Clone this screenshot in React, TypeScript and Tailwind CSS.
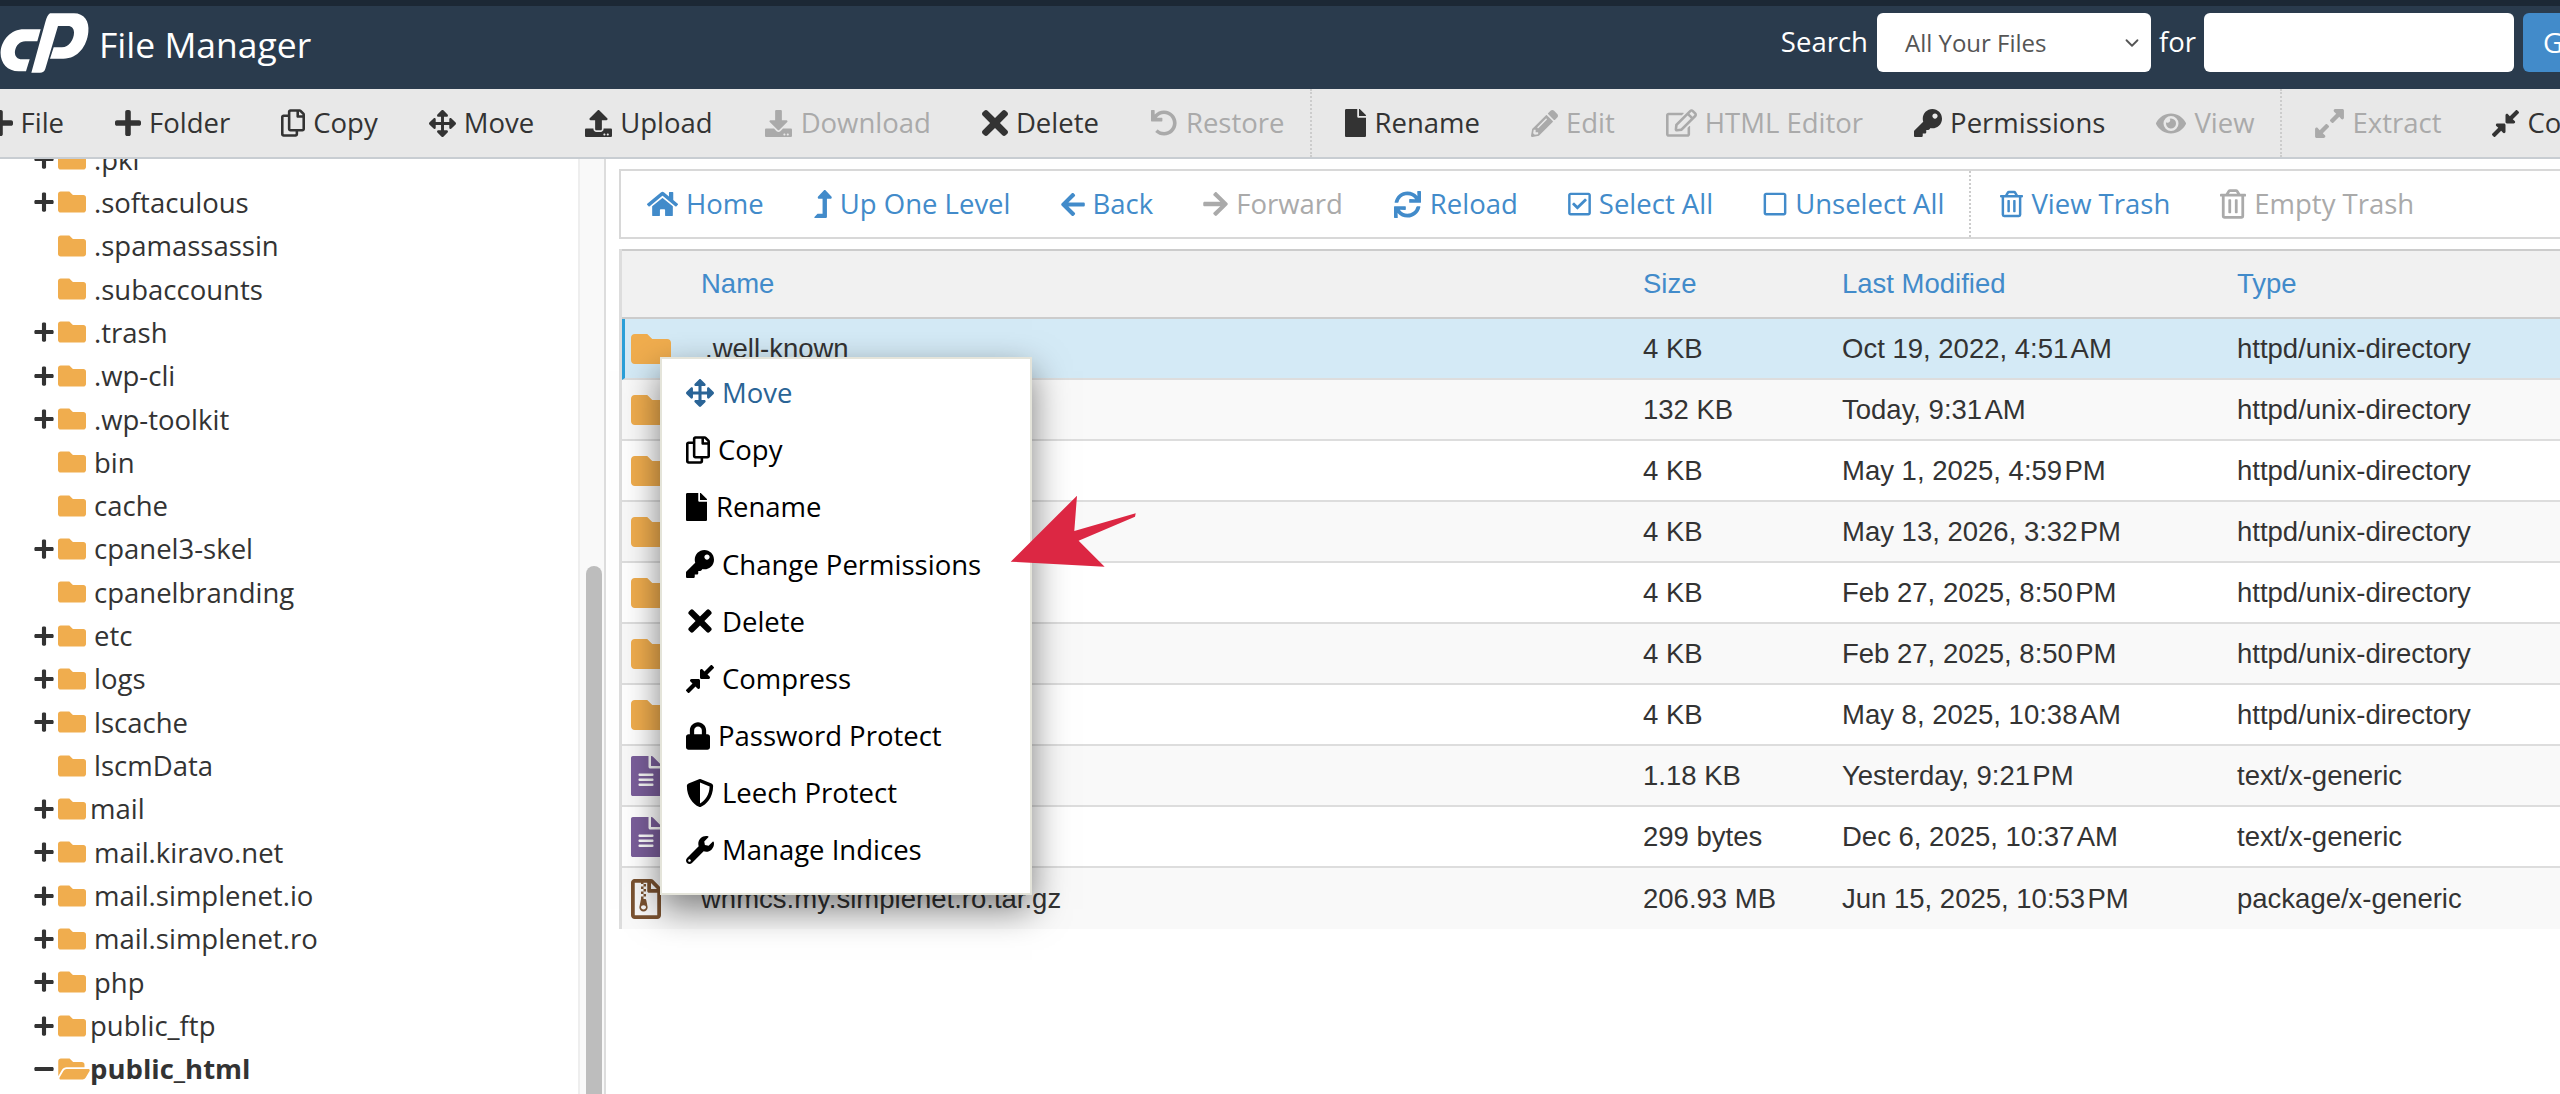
import React from "react";
import {
  FaArrowLeft,
  FaArrowRight,
  FaArrowsAlt,
  FaCompressAlt,
  FaDownload,
  FaEye,
  FaExpandAlt,
  FaFile,
  FaFileAlt,
  FaFolder,
  FaFolderOpen,
  FaHome,
  FaKey,
  FaLevelUpAlt,
  FaLock,
  FaMinus,
  FaPencilAlt,
  FaPlus,
  FaRegCheckSquare,
  FaRegCopy,
  FaRegEdit,
  FaRegFileArchive,
  FaRegSquare,
  FaRegTrashAlt,
  FaShieldAlt,
  FaSync,
  FaTimes,
  FaUndo,
  FaUpload,
  FaWrench,
} from "react-icons/fa";
import { LuChevronDown } from "react-icons/lu";

type ToolItem = {
  icon: React.ComponentType<{ className?: string }>;
  label: string;
  iconClass: string;
  muted?: boolean;
};

const topTools: ToolItem[][] = [
  [
    { icon: FaPlus, label: "File", iconClass: "w-[26px] h-[30px]" },
    { icon: FaPlus, label: "Folder", iconClass: "w-[26px] h-[30px]" },
    { icon: FaRegCopy, label: "Copy", iconClass: "w-[24px] h-[28px]" },
    { icon: FaArrowsAlt, label: "Move", iconClass: "w-[27px] h-[27px]" },
    { icon: FaUpload, label: "Upload", iconClass: "w-[27px] h-[27px]" },
    { icon: FaDownload, label: "Download", iconClass: "w-[29px] h-[27px]", muted: true },
    { icon: FaTimes, label: "Delete", iconClass: "w-[26px] h-[38px]" },
    { icon: FaUndo, label: "Restore", iconClass: "w-[28px] h-[26px]", muted: true },
  ],
  [
    { icon: FaFile, label: "Rename", iconClass: "w-[21px] h-[28px]" },
    { icon: FaPencilAlt, label: "Edit", iconClass: "w-[27px] h-[27px]", muted: true },
    { icon: FaRegEdit, label: "HTML Editor", iconClass: "w-[31px] h-[28px]", muted: true },
    { icon: FaKey, label: "Permissions", iconClass: "w-[28px] h-[28px]" },
    { icon: FaEye, label: "View", iconClass: "w-[30px] h-[27px]", muted: true },
  ],
  [
    { icon: FaExpandAlt, label: "Extract", iconClass: "w-[29px] h-[33px]", muted: true },
    { icon: FaCompressAlt, label: "Compress", iconClass: "w-[27px] h-[31px]" },
  ],
];

const navTools: ToolItem[][] = [
  [
    { icon: FaHome, label: "Home", iconClass: "w-[31px] h-[28px]" },
    { icon: FaLevelUpAlt, label: "Up One Level", iconClass: "w-[18px] h-[28px]" },
    { icon: FaArrowLeft, label: "Back", iconClass: "w-[24px] h-[27px]" },
    { icon: FaArrowRight, label: "Forward", iconClass: "w-[25px] h-[28px]", muted: true },
    { icon: FaSync, label: "Reload", iconClass: "w-[29px] h-[27px]" },
    { icon: FaRegCheckSquare, label: "Select All", iconClass: "w-[23px] h-[26px]" },
    { icon: FaRegSquare, label: "Unselect All", iconClass: "w-[24px] h-[26px]" },
  ],
  [
    { icon: FaRegTrashAlt, label: "View Trash", iconClass: "w-[23px] h-[30px]" },
    { icon: FaRegTrashAlt, label: "Empty Trash", iconClass: "w-[26px] h-[30px]", muted: true },
  ],
];

const tree = [
  { name: ".pki", plus: true },
  { name: ".softaculous", plus: true },
  { name: ".spamassassin" },
  { name: ".subaccounts" },
  { name: ".trash", plus: true },
  { name: ".wp-cli", plus: true },
  { name: ".wp-toolkit", plus: true },
  { name: "bin" },
  { name: "cache" },
  { name: "cpanel3-skel", plus: true },
  { name: "cpanelbranding" },
  { name: "etc", plus: true },
  { name: "logs", plus: true },
  { name: "lscache", plus: true },
  { name: "lscmData" },
  { name: "mail", plus: true, tight: true },
  { name: "mail.kiravo.net", plus: true },
  { name: "mail.simplenet.io", plus: true },
  { name: "mail.simplenet.ro", plus: true },
  { name: "php", plus: true },
  { name: "public_ftp", plus: true, tight: true },
];

const files = [
  { kind: "folder", name: ".well-known", size: "4 KB", date: "Oct 19, 2022, 4:51\u200aAM", type: "httpd/unix-directory" },
  { kind: "folder", name: "", size: "132 KB", date: "Today, 9:31\u200aAM", type: "httpd/unix-directory" },
  { kind: "folder", name: "", size: "4 KB", date: "May 1, 2025, 4:59\u200aPM", type: "httpd/unix-directory" },
  { kind: "folder", name: "", size: "4 KB", date: "May 13, 2026, 3:32\u200aPM", type: "httpd/unix-directory" },
  { kind: "folder", name: "", size: "4 KB", date: "Feb 27, 2025, 8:50\u200aPM", type: "httpd/unix-directory" },
  { kind: "folder", name: "", size: "4 KB", date: "Feb 27, 2025, 8:50\u200aPM", type: "httpd/unix-directory" },
  { kind: "folder", name: "", size: "4 KB", date: "May 8, 2025, 10:38\u200aAM", type: "httpd/unix-directory" },
  { kind: "text", name: "", size: "1.18 KB", date: "Yesterday, 9:21\u200aPM", type: "text/x-generic" },
  { kind: "text", name: "", size: "299 bytes", date: "Dec 6, 2025, 10:37\u200aAM", type: "text/x-generic" },
  { kind: "zip", name: "whmcs.my.simplenet.ro.tar.gz", size: "206.93 MB", date: "Jun 15, 2025, 10:53\u200aPM", type: "package/x-generic" },
];

const menuItems = [
  { icon: FaArrowsAlt, label: "Move", iconClass: "w-[28px] h-[28px]", labelClass: "ml-[8px] text-[#2a6496]", iconColor: "text-[#2a6496]" },
  { icon: FaRegCopy, label: "Copy", iconClass: "w-[24px] h-[28px]", labelClass: "ml-[8px]", iconColor: "text-black" },
  { icon: FaFile, label: "Rename", iconClass: "w-[21px] h-[28px]", labelClass: "ml-[9px]", iconColor: "text-black" },
  { icon: FaKey, label: "Change Permissions", iconClass: "w-[28px] h-[28px]", labelClass: "ml-[8px]", iconColor: "text-black" },
  { icon: FaTimes, label: "Delete", iconClass: "ml-[2px] w-[24px] h-[34px]", labelClass: "ml-[10px]", iconColor: "text-black" },
  { icon: FaCompressAlt, label: "Compress", iconClass: "w-[28px] h-[32px]", labelClass: "ml-[8px]", iconColor: "text-black" },
  { icon: FaLock, label: "Password Protect", iconClass: "w-[24px] h-[28px]", labelClass: "ml-[8px]", iconColor: "text-black" },
  { icon: FaShieldAlt, label: "Leech Protect", iconClass: "w-[28px] h-[28px]", labelClass: "ml-[8px]", iconColor: "text-black" },
  { icon: FaWrench, label: "Manage Indices", iconClass: "w-[28px] h-[28px]", labelClass: "ml-[8px]", iconColor: "text-black" },
];

const Tool = ({ item, color, pad }: { item: ToolItem; color: string; pad: string }) => {
  const Icon = item.icon;
  return (
    <div className={`flex shrink-0 items-center gap-[8px] ${pad} whitespace-nowrap ${item.muted ? "text-[#aaaaaa]" : color}`}>
      <Icon className={item.iconClass} />
      <span>{item.label}</span>
    </div>
  );
};

const CpanelLogo = () => (
  <svg viewBox="0 0 330 240" className="h-[80px] w-[110px] shrink-0" fill="#ffffff">
    <path d="M150 22 L222 22 C252 22 269 46 265 78 C261 120 234 158 190 158 L150 158 L161 124 L186 124 C207 124 222 100 222 80 C222 67 215 60 204 60 L174 60 L136 188 C134 196 128 200 120 200 L94 200 L136 48 C140 34 144 26 150 22 Z" />
    <path d="M122 70 L72 70 C32 70 6 102 2 135 C-1 168 20 196 56 196 L78 196 L89 160 L66 160 C50 160 43 148 45 135 C48 118 60 106 76 106 L112 106 Z" />
  </svg>
);

const FileIcon = ({ kind }: { kind: string }) => {
  if (kind === "folder") return <FaFolder className="h-[40px] w-[40px] text-[#f0ad4e]" />;
  if (kind === "text") return <FaFileAlt className="h-[40px] w-[30px] text-[#7b5f9b]" />;
  return <FaRegFileArchive className="h-[40px] w-[30px] text-[#7a5230]" />;
};

export default function App() {
  return (
    <div className="relative flex h-[1094px] w-[2560px] flex-col overflow-hidden bg-white font-['Open_Sans',sans-serif] text-[27.5px] text-[#333333]">
      <div className="h-[6px] shrink-0 bg-[#1c2835]" />

      <header className="flex h-[83px] shrink-0 items-center overflow-hidden bg-[#2a3b4d] text-white">
        <div className="mb-[3px] shrink-0">
          <CpanelLogo />
        </div>
        <div className="mb-[6px] ml-[-11px] text-[35.5px] whitespace-nowrap">File Manager</div>
        <div className="ml-auto flex shrink-0 items-center translate-x-[38px]">
          <span className="mb-[12px] mr-[9px]">Search</span>
          <div className="mb-[10px] flex h-[59px] w-[274px] items-center justify-between rounded-[6px] bg-white pl-[28px] pr-[8px] text-[24px] text-[#555555]">
            All Your Files
            <LuChevronDown className="h-[22px] w-[22px]" />
          </div>
          <span className="mx-[8px] mb-[12px]">for</span>
          <input className="mb-[10px] h-[59px] w-[310px] rounded-[6px] bg-white" />
          <div className="mb-[10px] ml-[9px] flex h-[59px] w-[75px] items-center rounded-[6px] bg-[#428bca] pl-[20px]">Go</div>
        </div>
      </header>

      <nav className="flex h-[70px] shrink-0 items-stretch overflow-hidden border-b-2 border-[#c8cdd2] bg-[#e8e8e8] pl-0">
        {topTools.map((group, i) => (
          <div
            key={i}
            className={
              i === 0
                ? "ml-[-39px] flex shrink-0 items-center"
                : "flex shrink-0 items-center border-l-2 border-dotted border-[#cccccc] pl-[8px]"
            }
          >
            {group.map((item) => (
              <Tool key={item.label} item={item} color="text-[#333333]" pad="px-[25.5px]" />
            ))}
          </div>
        ))}
      </nav>

      <div className="flex min-h-0 flex-1">
        <aside className="flex w-[608px] shrink-0">
          <div className="w-[580px] shrink-0 overflow-hidden border-r-2 border-[#eeeeee]">
            <ul className="mt-[-21.5px]">
              {tree.map((row) => (
                <li key={row.name} className="flex h-[43.33px] items-center pl-[34px] whitespace-nowrap">
                  <span className="w-[24px] shrink-0">{row.plus && <FaPlus className="h-[22px] w-[20px]" />}</span>
                  <FaFolder className="h-[28px] w-[28px] shrink-0 text-[#f0ad4e]" />
                  <span className={row.tight ? "ml-[4px]" : "ml-[8px]"}>{row.name}</span>
                </li>
              ))}
              <li className="flex h-[43.33px] items-center pl-[34px] font-bold whitespace-nowrap">
                <FaMinus className="mr-[4px] h-[22px] w-[20px] shrink-0" />
                <FaFolderOpen className="h-[28px] w-[32px] shrink-0 text-[#f0ad4e]" />
                <span>public_html</span>
              </li>
            </ul>
          </div>
          <div className="flex w-[26px] shrink-0 flex-col border-r-2 border-[#dddddd] bg-[#f9f9f9] pl-[6px] pr-[2px] pt-[407px]">
            <div className="flex-1 rounded-t-[8px] bg-[#bdbdbd]" />
          </div>
        </aside>

        <main className="min-w-0 flex-1 overflow-hidden pl-[11px] pt-[10px]">
          <div className="flex h-[70px] items-stretch border-y-2 border-l-2 border-[#d8d8d8] pl-[1px] text-[#428bca]">
            {navTools.map((group, i) => (
              <div
                key={i}
                className={
                  i === 0
                    ? "flex shrink-0 items-center"
                    : "flex shrink-0 items-center border-l-2 border-dotted border-[#cccccc] pl-[4px]"
                }
              >
                {group.map((item) => (
                  <Tool key={item.label} item={item} color="text-[#428bca]" pad="px-[25px]" />
                ))}
              </div>
            ))}
          </div>

          <div className="mt-[10px] border-l-[3px] border-[#dddddd] font-['Liberation_Sans',sans-serif]">
            <div className="grid h-[70px] grid-cols-[1021px_199px_395px_1fr] items-center border-y-[2px] border-[#cccccc] bg-[#f1f1f1] text-[#428bca]">
              <span className="pl-[79px]">Name</span>
              <span>Size</span>
              <span>Last Modified</span>
              <span>Type</span>
            </div>
            {files.map((file, i) => (
              <div
                key={i}
                className={`grid h-[61px] grid-cols-[1021px_199px_395px_1fr] items-center ${
                  i === 9 ? "" : "border-b-2 border-[#dddddd]"
                } ${i === 0 ? "border-l-[3px] border-l-[#2a9fd8] bg-[#d4eaf6]" : i % 2 === 1 ? "bg-[#f9f9f9]" : "bg-white"}`}
              >
                <div className={`flex items-center ${i === 0 ? "pl-[6px]" : "pl-[9px]"}`}>
                  <span className="w-[70px] shrink-0">
                    <FileIcon kind={file.kind} />
                  </span>
                  <span className={`whitespace-nowrap ${i === 0 ? "ml-[4px]" : ""}`}>{file.name}</span>
                </div>
                <span className={i === 0 ? "ml-[-3px]" : ""}>{file.size}</span>
                <span className={i === 0 ? "ml-[-3px]" : ""}>{file.date}</span>
                <span className={i === 0 ? "ml-[-3px]" : ""}>{file.type}</span>
              </div>
            ))}
          </div>
        </main>
      </div>

      <div className="absolute left-[660px] top-[357px] flex h-[538px] w-[372px] flex-col border-2 border-[#e4e4da] bg-white pl-[24px] pt-[5px] text-black shadow-[0_14px_34px_rgba(0,0,0,0.5)]">
        {menuItems.map((item) => {
          const Icon = item.icon;
          return (
            <div key={item.label} className="flex h-[57.2px] shrink-0 items-center whitespace-nowrap">
              <Icon className={`${item.iconClass} ${item.iconColor}`} />
              <span className={item.labelClass}>{item.label}</span>
            </div>
          );
        })}
      </div>

      <svg className="absolute left-[1000px] top-[490px] h-[80px] w-[140px]" viewBox="0 0 140 80" fill="#dc2743">
        <polygon points="10.7,71.7 77,5.7 74.3,41 135.7,23.3 135,26.7 78.6,50.7 104.6,76.7" />
      </svg>
    </div>
  );
}
